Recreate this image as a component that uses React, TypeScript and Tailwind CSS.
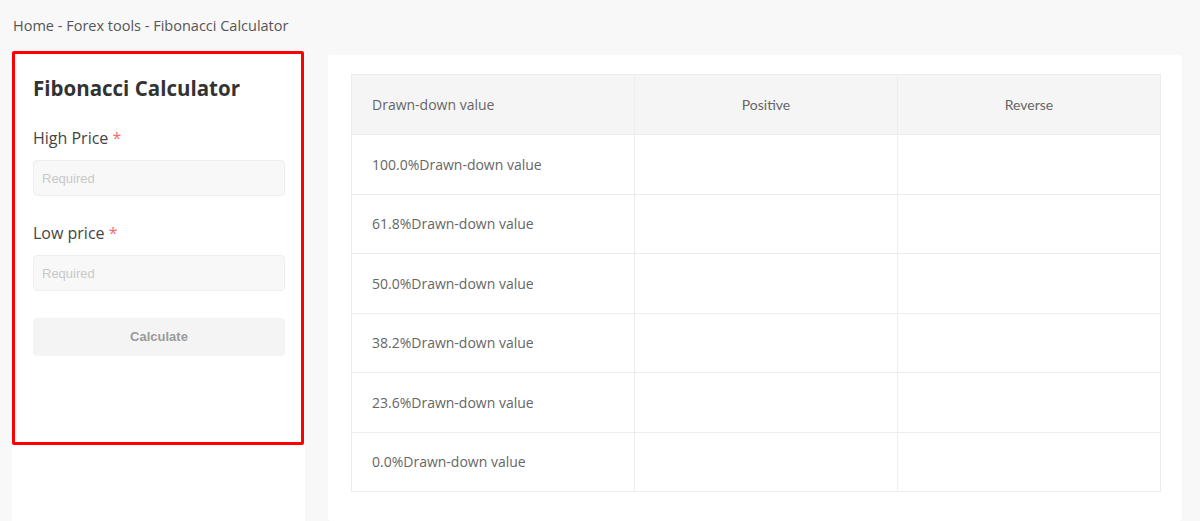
const rows = ["100.0%", "61.8%", "50.0%", "38.2%", "23.6%", "0.0%"];

export default function App() {
  return (
    <div className="h-[521px] overflow-hidden bg-[#f8f8f8] px-3 font-['Open_Sans',sans-serif] flex flex-col">
      {/* breadcrumb */}
      <div className="h-[51px] pt-[16px] pl-px text-[14.5px] leading-[20px] text-[#555]">
        Home - Forex tools - Fibonacci Calculator
      </div>

      <div className="flex flex-1 gap-[23px] pr-[7px]">
        {/* left form card */}
        <div className="w-[293px] shrink-0 bg-white">
          <div className="w-[292px] h-[394px] border-[3px] border-[#ff0000] rounded-[2px] pl-[18px] pr-[16px] pt-[20px]">
            <h2 className="text-[20.5px] leading-[28px] font-bold text-[#333]">Fibonacci Calculator</h2>

            <label className="block mt-[24px] text-[16px] leading-[24px] text-[#444]">
              High Price <span className="text-[#f56c6c]">*</span>
            </label>
            <input
              placeholder="Required"
              className="mt-[10px] w-full h-[36px] rounded-[4px] border border-[#eeeeee] bg-[#f8f8f8] px-2 text-[13px] font-['Liberation_Sans',sans-serif] placeholder:text-[#c8c8c8] outline-none"
            />

            <label className="block mt-[25px] text-[16px] leading-[24px] text-[#444]">
              Low price <span className="text-[#f56c6c]">*</span>
            </label>
            <input
              placeholder="Required"
              className="mt-[10px] w-full h-[36px] rounded-[4px] border border-[#eeeeee] bg-[#f8f8f8] px-2 text-[13px] font-['Liberation_Sans',sans-serif] placeholder:text-[#c8c8c8] outline-none"
            />

            <button className="mt-[27px] w-full h-[38px] rounded-[4px] bg-[#f4f4f4] text-[13px] font-bold text-[#9a9a9a] font-['Liberation_Sans',sans-serif]">
              Calculate
            </button>
          </div>
        </div>

        {/* right result card */}
        <div className="flex-1 mt-[4px] bg-white rounded-[4px] pl-[23px] pr-[21px] pt-[19px]">
          <table className="w-[809px] border-collapse text-[14px] text-[#666] table-fixed">
            <colgroup>
              <col className="w-[283px]" />
              <col className="w-[263px]" />
              <col className="w-[263px]" />
            </colgroup>
            <thead>
              <tr className="h-[60px] bg-[#f5f5f5]">
                <th className="border border-[#ededed] pl-[20px] text-left font-normal">Drawn-down value</th>
                <th className="border border-[#ededed] text-center font-normal font-['Lato',sans-serif]">Positive</th>
                <th className="border border-[#ededed] text-center font-normal font-['Lato',sans-serif]">Reverse</th>
              </tr>
            </thead>
            <tbody>
              {rows.map((r) => (
                <tr key={r} className="h-[59.5px]">
                  <td className="border border-[#ededed] pl-[20px]">{r}Drawn-down value</td>
                  <td className="border border-[#ededed]"></td>
                  <td className="border border-[#ededed]"></td>
                </tr>
              ))}
            </tbody>
          </table>
        </div>
      </div>
    </div>
  );
}
